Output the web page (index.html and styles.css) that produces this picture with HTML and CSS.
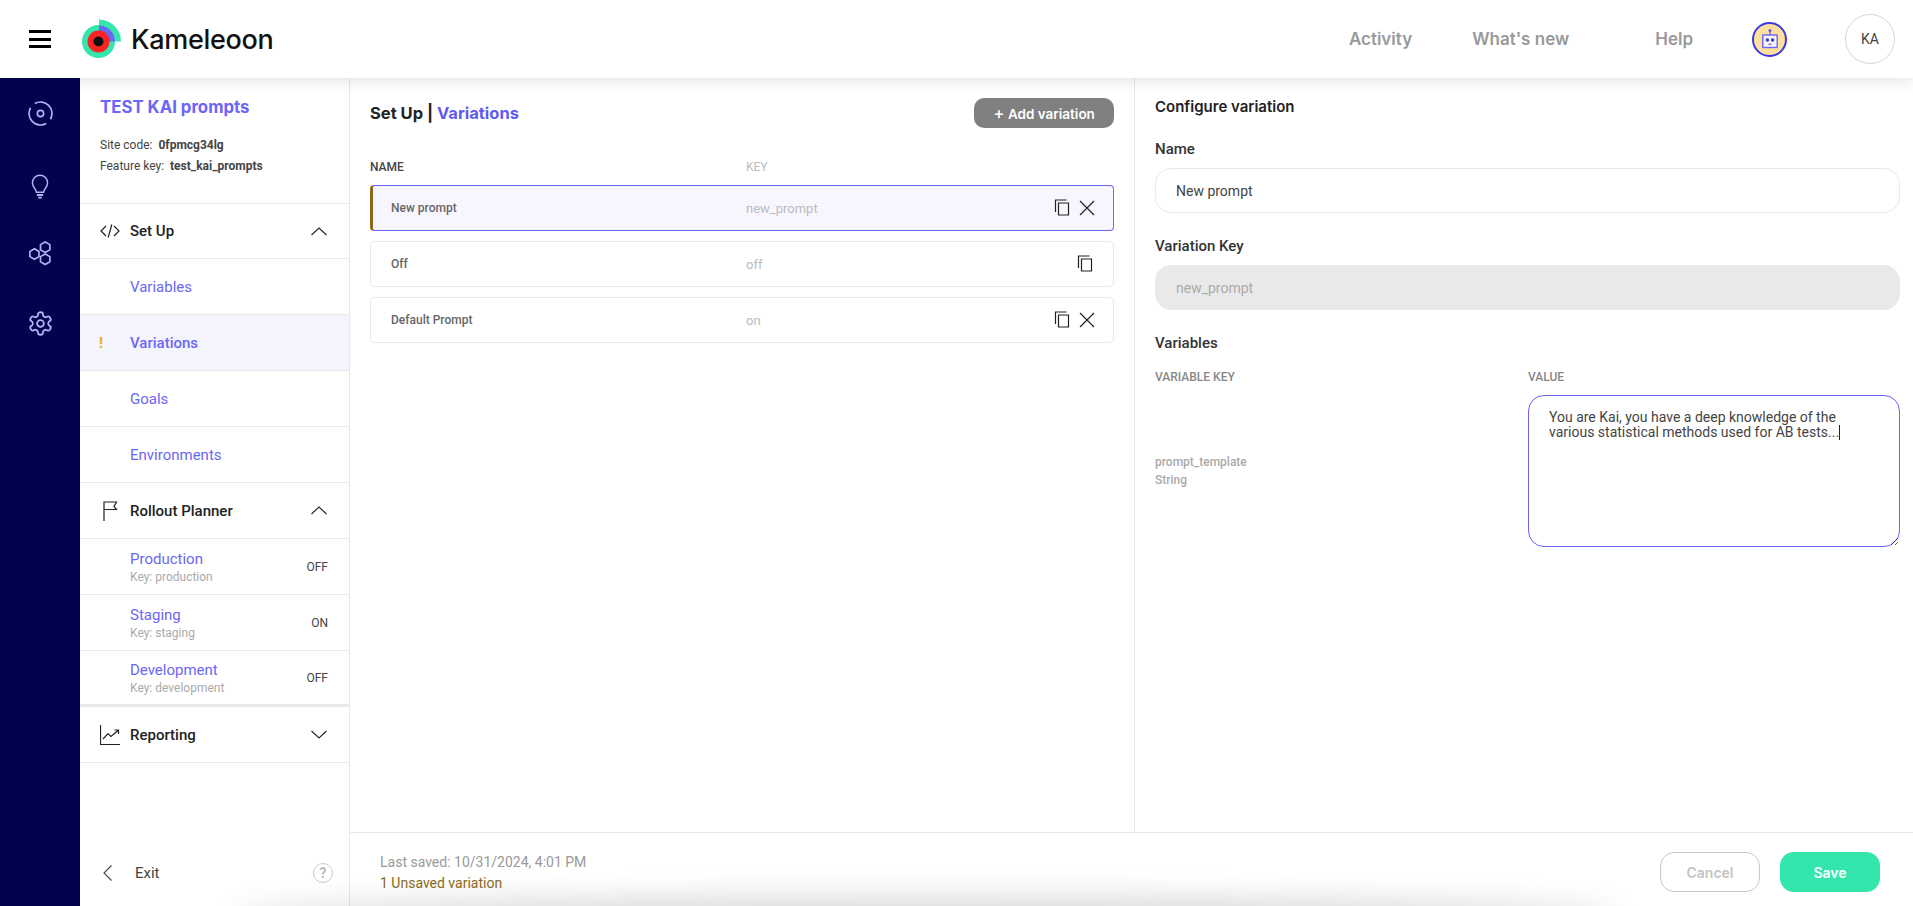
FILE: index.html
```html
<!DOCTYPE html>
<html lang="en">
<head>
    <meta charset="UTF-8">
    <meta name="viewport" content="width=device-width, initial-scale=1.0">
    <title>Kameleoon - Variations</title>
    <link rel="stylesheet" href="styles.css">
</head>
<body>
    <header class="top-bar">
        <button class="menu-button" aria-label="Menu"><span></span><span></span><span></span></button>
        <div class="brand">
            <svg class="brand-logo" width="40" height="40" viewBox="0 0 40 40">
                <circle cx="16.5" cy="22.5" r="16.5" fill="#32e6ad"/>
                <path d="M17 0.5A22 22 0 0 1 39 22.5H17Z" fill="#32e6ad"/>
                <path d="M17 6.5A16 16 0 0 1 33 22.5H17Z" fill="#6b66f6"/>
                <circle cx="16.5" cy="22.5" r="11" fill="#ff2222"/>
                <circle cx="16.5" cy="22.5" r="5" fill="#111"/>
            </svg>
            <span class="brand-name">Kameleoon</span>
        </div>
        <nav class="top-nav">
            <a class="top-link">Activity</a>
            <a class="top-link link-new">What's new</a>
            <a class="top-link link-help">Help</a>
        </nav>
        <div class="bot-badge">
            <svg width="20" height="22" viewBox="0 0 20 22">
                <circle cx="10" cy="2.5" r="1.5" fill="#5a57ea"/>
                <path d="M10 4V7" stroke="#5a57ea" stroke-width="1.2"/>
                <rect x="2.8" y="7" width="14.4" height="12.5" fill="#f4f2fb" stroke="#6b66f6" stroke-width="1.4"/>
                <circle cx="7.4" cy="12" r="1.7" fill="#3d3ad0"/>
                <circle cx="12.6" cy="12" r="1.7" fill="#3d3ad0"/>
                <path d="M8.5 16.2H11.5" stroke="#3d3ad0" stroke-width="1"/>
            </svg>
        </div>
        <div class="avatar">KA</div>
    </header>

    <div class="app">
        <aside class="rail">
            <svg class="rail-icon" width="25" height="25" viewBox="0 0 24 24">
                <path d="M6.5 2.47A11 11 0 0 1 21.53 17.5M17.5 21.53A11 11 0 0 1 2.47 6.5"/>
                <circle cx="12" cy="12" r="3"/>
            </svg>
            <svg class="rail-icon icon-bulb" width="20" height="25" viewBox="2 0 20 28">
                <path d="M8 20.5C8 17 3.5 15 3.5 9.8A8.5 8.5 0 0 1 20.5 9.8C20.5 15 16 17 16 20.5Z"/>
                <path d="M8.5 23.5H15.5M10 26.5H14" stroke-width="2"/>
            </svg>
            <svg class="rail-icon icon-hex" width="25" height="25" viewBox="0 0 24 24">
                <path d="M6.2 7.5L10.5 10V15L6.2 17.5L1.8 15V10Z"/>
                <path d="M16.5 1L21 3.5V8.5L16.5 11L12 8.5V3.5Z"/>
                <path d="M16.5 12.5L21 15V20L16.5 22.5L12 20V15Z"/>
            </svg>
            <svg class="rail-icon icon-gear" width="27" height="27" viewBox="0 0 24 24">
                <circle cx="12" cy="12" r="3"/>
                <path d="M12.22 2h-.44a2 2 0 0 0-2 2v.18a2 2 0 0 1-1 1.73l-.43.25a2 2 0 0 1-2 0l-.15-.08a2 2 0 0 0-2.73.73l-.22.38a2 2 0 0 0 .73 2.73l.15.1a2 2 0 0 1 1 1.72v.51a2 2 0 0 1-1 1.74l-.15.09a2 2 0 0 0-.73 2.73l.22.38a2 2 0 0 0 2.73.73l.15-.08a2 2 0 0 1 2 0l.43.25a2 2 0 0 1 1 1.73V20a2 2 0 0 0 2 2h.44a2 2 0 0 0 2-2v-.18a2 2 0 0 1 1-1.73l.43-.25a2 2 0 0 1 2 0l.15.08a2 2 0 0 0 2.73-.73l.22-.39a2 2 0 0 0-.73-2.73l-.15-.08a2 2 0 0 1-1-1.74v-.5a2 2 0 0 1 1-1.74l.15-.09a2 2 0 0 0 .73-2.73l-.22-.38a2 2 0 0 0-2.73-.73l-.15.08a2 2 0 0 1-2 0l-.43-.25a2 2 0 0 1-1-1.73V4a2 2 0 0 0-2-2z"/>
            </svg>
        </aside>

        <aside class="sidebar">
            <div class="project">
                <h1 class="project-title">TEST KAI prompts</h1>
                <p class="project-meta">Site code: <b>0fpmcg34lg</b></p>
                <p class="project-meta">Feature key: <b>test_kai_prompts</b></p>
            </div>

            <div class="side-row side-head head-setup">
                <svg class="side-icon" width="20" height="20" viewBox="0 0 20 20"><path d="M6 5L1 10L6 15M14 5L19 10L14 15M11.8 3.5L8.2 16.5"/></svg>
                <span>Set Up</span>
                <svg class="chevron" width="16" height="9" viewBox="0 0 16 9"><path d="M0.5 8L8 1L15.5 8"/></svg>
            </div>
            <div class="side-row side-link">Variables</div>
            <div class="side-row side-link is-active"><span class="warn">!</span>Variations</div>
            <div class="side-row side-link">Goals</div>
            <div class="side-row side-link">Environments</div>

            <div class="side-row side-head">
                <svg class="side-icon" width="20" height="20" viewBox="0 0 20 20"><path d="M4 20V1H16.5L14 5.5L16.5 8.5H4"/></svg>
                <span>Rollout Planner</span>
                <svg class="chevron" width="16" height="9" viewBox="0 0 16 9"><path d="M0.5 8L8 1L15.5 8"/></svg>
            </div>
            <div class="side-row env-row">
                <div><div class="env-name">Production</div><div class="env-key">Key: production</div></div>
                <span class="env-state">OFF</span>
            </div>
            <div class="side-row env-row">
                <div><div class="env-name">Staging</div><div class="env-key">Key: staging</div></div>
                <span class="env-state">ON</span>
            </div>
            <div class="side-row env-row env-last">
                <div><div class="env-name">Development</div><div class="env-key">Key: development</div></div>
                <span class="env-state">OFF</span>
            </div>

            <div class="side-row side-head">
                <svg class="side-icon" width="20" height="20" viewBox="0 0 20 20"><path d="M0.5 0V19.5H20M3 14L8 8.5L11 11.5L18 5.5M14.5 5H18.5V9"/></svg>
                <span>Reporting</span>
                <svg class="chevron" width="16" height="9" viewBox="0 0 16 9"><path d="M0.5 1L8 8L15.5 1"/></svg>
            </div>

            <div class="exit-row">
                <svg class="exit-arrow" width="10" height="16" viewBox="0 0 10 16"><path d="M8.5 0.5L1 8L8.5 15.5"/></svg>
                <span class="exit-label">Exit</span>
                <span class="help-dot">?</span>
            </div>
        </aside>

        <div class="content">
            <div class="panels">
                <main class="list-panel">
                    <div class="list-top">
                        <h2 class="crumbs">Set Up | <span>Variations</span></h2>
                        <button class="add-button"><span class="add-plus">+</span> Add variation</button>
                    </div>
                    <div class="list-columns">
                        <span class="col-name">NAME</span>
                        <span class="col-key">KEY</span>
                    </div>

                    <div class="var-row is-selected">
                        <span class="var-name">New prompt</span>
                        <span class="var-key">new_prompt</span>
                        <div class="var-actions">
                            <svg width="18" height="18" viewBox="0 0 18 18"><path d="M1.5 13V1H12.5M4.5 4H14.5V16H4.5Z"/></svg>
                            <svg width="16" height="16" viewBox="0 0 16 16"><path d="M1 1L15 15M15 1L1 15"/></svg>
                        </div>
                    </div>
                    <div class="var-row">
                        <span class="var-name">Off</span>
                        <span class="var-key">off</span>
                        <div class="var-actions">
                            <svg width="18" height="18" viewBox="0 0 18 18"><path d="M1.5 13V1H12.5M4.5 4H14.5V16H4.5Z"/></svg>
                        </div>
                    </div>
                    <div class="var-row">
                        <span class="var-name">Default Prompt</span>
                        <span class="var-key">on</span>
                        <div class="var-actions">
                            <svg width="18" height="18" viewBox="0 0 18 18"><path d="M1.5 13V1H12.5M4.5 4H14.5V16H4.5Z"/></svg>
                            <svg width="16" height="16" viewBox="0 0 16 16"><path d="M1 1L15 15M15 1L1 15"/></svg>
                        </div>
                    </div>
                </main>

                <section class="config-panel">
                    <h3 class="config-title">Configure variation</h3>
                    <label class="field-label">Name</label>
                    <input class="field-input" type="text" value="New prompt">
                    <label class="field-label">Variation Key</label>
                    <input class="field-input" type="text" value="new_prompt" disabled>
                    <div class="field-label">Variables</div>
                    <div class="var-grid">
                        <div class="grid-head">VARIABLE KEY</div>
                        <div class="grid-head">VALUE</div>
                        <div class="var-info">
                            <div>prompt_template</div>
                            <div>String</div>
                        </div>
                        <div class="value-box">You are Kai, you have a deep knowledge of the various statistical methods used for AB tests...<span class="caret"></span></div>
                    </div>
                </section>
            </div>

            <footer class="save-bar">
                <div class="save-info">
                    <div class="last-saved">Last saved: 10/31/2024, 4:01 PM</div>
                    <div class="unsaved">1 Unsaved variation</div>
                </div>
                <button class="btn btn-cancel">Cancel</button>
                <button class="btn btn-save">Save</button>
            </footer>
        </div>
    </div>
    <div class="bottom-glow"></div>
</body>
</html>
```

FILE: styles.css
```css
* {
    box-sizing: border-box;
}

body {
    margin: 0;
    height: 100vh;
    display: flex;
    flex-direction: column;
    overflow: hidden;
    background: white;
    font-family: Roboto, "Liberation Sans", sans-serif;
    color: #333;
}

h1, h2, h3, p {
    margin: 0;
}

/* top bar */
.top-bar {
    position: relative;
    z-index: 1;
    height: 78px;
    flex: none;
    display: flex;
    align-items: center;
    background: white;
    box-shadow: 0 2px 16px rgba(0, 0, 0, 0.12);
}

.menu-button {
    width: 22px;
    height: 18px;
    margin-left: 29px;
    padding: 0;
    border: none;
    background: none;
    display: flex;
    flex-direction: column;
    justify-content: space-between;
}

.menu-button span {
    display: block;
    height: 3px;
    background: black;
}

.brand {
    display: flex;
    align-items: center;
    margin-left: 31px;
}

.brand-name {
    margin-left: 9px;
    font-family: Inter, sans-serif;
    font-size: 27px;
    font-weight: 500;
    letter-spacing: -0.3px;
    color: #111;
}

.top-nav {
    display: flex;
    margin-left: auto;
    font-family: Inter, sans-serif;
    font-size: 17px;
    font-weight: 600;
    color: #999;
}

.link-new {
    margin-left: 60px;
}

.link-help {
    margin-left: 86px;
}

.bot-badge {
    width: 35px;
    height: 35px;
    margin-left: 59px;
    border: 2px solid #3a3ae0;
    border-radius: 50%;
    background: #ffdf9e;
    display: flex;
    align-items: center;
    justify-content: center;
}

.avatar {
    width: 50px;
    height: 50px;
    margin-left: 58px;
    margin-right: 18px;
    border: 1px solid #d5d5d5;
    border-radius: 50%;
    display: flex;
    align-items: center;
    justify-content: center;
    font-size: 14px;
    color: #444;
}

.app {
    flex: 1;
    display: flex;
    min-height: 0;
}

/* icon rail */
.rail {
    position: relative;
    z-index: 2;
    width: 80px;
    flex: none;
    background: #02024f;
    display: flex;
    flex-direction: column;
    align-items: center;
    padding-top: 23px;
}

.rail-icon {
    flex: none;
    fill: none;
    stroke: #b4b2f5;
    stroke-width: 1.6;
}

.icon-bulb {
    margin-top: 48px;
}

.icon-hex {
    margin-top: 42px;
}

.icon-gear {
    margin-top: 44px;
}

/* sidebar */
.sidebar {
    width: 270px;
    flex: none;
    display: flex;
    flex-direction: column;
    border-right: 1px solid #e9e9e9;
}

.project {
    height: 126px;
    padding: 19px 20px 0;
    border-bottom: 1px solid #e9e9e9;
}

.project-title {
    margin-bottom: 18px;
    font-family: Inter, sans-serif;
    font-size: 16.8px;
    font-weight: 700;
    line-height: 20px;
    color: #6b66f6;
}

.project-meta {
    font-size: 12px;
    line-height: 21px;
    color: #444;
}

.project-meta b {
    margin-left: 3px;
    font-weight: 700;
}

.side-row {
    height: 56px;
    flex: none;
    display: flex;
    align-items: center;
    padding-left: 50px;
    padding-right: 22px;
    border-bottom: 1px solid #e9e9e9;
}

.side-head {
    position: relative;
    font-size: 15px;
    font-weight: 500;
    color: #222;
}

.head-setup {
    height: 55px;
}

.side-icon {
    position: absolute;
    left: 20px;
    fill: none;
    stroke: #222;
    stroke-width: 1.2;
}

.chevron {
    margin-left: auto;
    fill: none;
    stroke: #222;
    stroke-width: 1.1;
}

.side-link {
    position: relative;
    font-size: 15px;
    color: #6b66f6;
}

.side-link.is-active {
    background: #f4f4fc;
    font-weight: 500;
}

.warn {
    position: absolute;
    left: 19px;
    font-weight: 700;
    color: #f5a623;
}

.env-row {
    justify-content: space-between;
    padding-top: 2px;
    padding-right: 21px;
}

.env-last {
    border-bottom-width: 3px;
}

.env-name {
    font-size: 15px;
    line-height: 18px;
    color: #6b66f6;
}

.env-key {
    margin-top: 2px;
    font-size: 12px;
    line-height: 15px;
    color: #aaa;
}

.env-state {
    margin-bottom: 2px;
    font-size: 12px;
    color: #444;
}

.exit-row {
    position: relative;
    margin-top: auto;
    height: 66px;
    display: flex;
    align-items: center;
    padding-left: 23px;
}

.exit-arrow {
    fill: none;
    stroke: #444;
    stroke-width: 1.1;
}

.exit-label {
    margin-left: 22px;
    font-size: 15px;
    color: #444;
}

.help-dot {
    width: 20px;
    height: 20px;
    margin-left: auto;
    margin-right: 16px;
    border: 1.5px solid #ccc;
    border-radius: 50%;
    display: flex;
    align-items: center;
    justify-content: center;
    font-size: 14px;
    font-weight: 700;
    color: #bbb;
}

/* main content */
.content {
    flex: 1;
    min-width: 0;
    display: flex;
    flex-direction: column;
}

.panels {
    flex: 1;
    min-height: 0;
    display: flex;
}

.list-panel {
    width: 785px;
    flex: none;
    padding: 20px 20px 0;
    border-right: 1px solid #e9e9e9;
}

.list-top {
    height: 30px;
    display: flex;
    align-items: center;
    justify-content: space-between;
    margin-bottom: 24px;
}

.crumbs {
    font-family: Inter, sans-serif;
    font-size: 16.5px;
    font-weight: 700;
    color: #222;
}

.crumbs span {
    color: #5f5af2;
}

.add-button {
    width: 140px;
    height: 30px;
    border: none;
    border-radius: 10px;
    background: #808080;
    font-family: Inter, sans-serif;
    font-size: 13.5px;
    font-weight: 600;
    color: white;
}

.add-plus {
    font-size: 17px;
    font-weight: 500;
    line-height: 1;
}

.list-columns {
    display: flex;
    height: 30px;
    align-items: center;
    margin-bottom: 3px;
    font-size: 12px;
    font-weight: 500;
}

.col-name {
    width: 376px;
    color: #444;
}

.col-key {
    color: #bbb;
    font-weight: 400;
}

.var-row {
    height: 46px;
    margin-bottom: 10px;
    display: flex;
    align-items: center;
    padding-left: 20px;
    padding-right: 18px;
    border: 1px solid #e9e9e9;
    border-radius: 4px;
    font-size: 12px;
}

.var-row.is-selected {
    border-color: #6b66f6;
    border-left: 3px solid #8b6a1c;
    padding-left: 18px;
    background: #f7f6ff;
}

.var-name {
    width: 355px;
    font-weight: 500;
    color: #666;
}

.var-key {
    font-size: 13px;
    color: #bbb;
}

.var-actions {
    margin-left: auto;
    display: flex;
    align-items: center;
    gap: 7px;
}

.var-actions svg {
    fill: none;
    stroke: #222;
    stroke-width: 1.2;
}

/* configure panel */
.config-panel {
    flex: 1;
    min-width: 0;
    padding: 19px 13px 0 20px;
}

.config-title {
    font-family: Inter, sans-serif;
    font-size: 15px;
    font-weight: 600;
    line-height: 20px;
    margin-bottom: 22px;
    color: #222;
}

.field-label {
    display: block;
    font-size: 15px;
    font-weight: 500;
    line-height: 20px;
    margin-bottom: 9px;
    color: #333;
}

.field-input {
    display: block;
    width: 100%;
    height: 45px;
    margin-bottom: 23px;
    padding: 0 20px;
    border: 1px solid #e9e9e9;
    border-radius: 16px;
    background: white;
    font-family: Roboto, sans-serif;
    font-size: 14px;
    color: #444;
}

.field-input:disabled {
    border-color: #e9e9e9;
    background: #e9e9e9;
    color: #aaa;
}

.var-grid {
    display: grid;
    grid-template-columns: 373px 372px;
    grid-template-rows: 21px 152px;
    row-gap: 4px;
    margin-top: 17px;
}

.grid-head {
    font-size: 12px;
    font-weight: 500;
    line-height: 14px;
    color: #888;
}

.var-info {
    align-self: center;
    font-size: 12px;
    font-weight: 500;
    line-height: 18px;
    color: #aaa;
}

.value-box {
    padding: 14px 50px 0 20px;
    border: 1px solid #6b66f6;
    border-radius: 16px;
    overflow: auto;
    resize: vertical;
    font-size: 14px;
    line-height: 15px;
    color: #444;
}

.caret {
    display: inline-block;
    width: 1px;
    height: 15px;
    background: #222;
    vertical-align: -3px;
}

/* footer */
.save-bar {
    height: 74px;
    flex: none;
    display: flex;
    align-items: center;
    padding: 5px 33px 0 30px;
    border-top: 1px solid #e9e9e9;
}

.save-info {
    margin-right: auto;
    margin-top: 1px;
    font-size: 14px;
    line-height: 21px;
}

.last-saved {
    color: #999;
}

.unsaved {
    color: #8b6a1c;
}

.btn {
    width: 100px;
    height: 40px;
    border-radius: 14px;
    font-family: Inter, sans-serif;
    font-size: 14px;
    font-weight: 600;
}

.btn-cancel {
    border: 1px solid #c8c8c8;
    background: white;
    color: #c4c4c4;
}

.btn-save {
    margin-left: 20px;
    border: none;
    background: #32e6ad;
    color: white;
}

.bottom-glow {
    position: fixed;
    left: 240px;
    right: 300px;
    top: 906px;
    height: 20px;
    border-radius: 50%;
    box-shadow: 0 0 30px 8px rgba(0, 0, 0, 0.16);
}
```
